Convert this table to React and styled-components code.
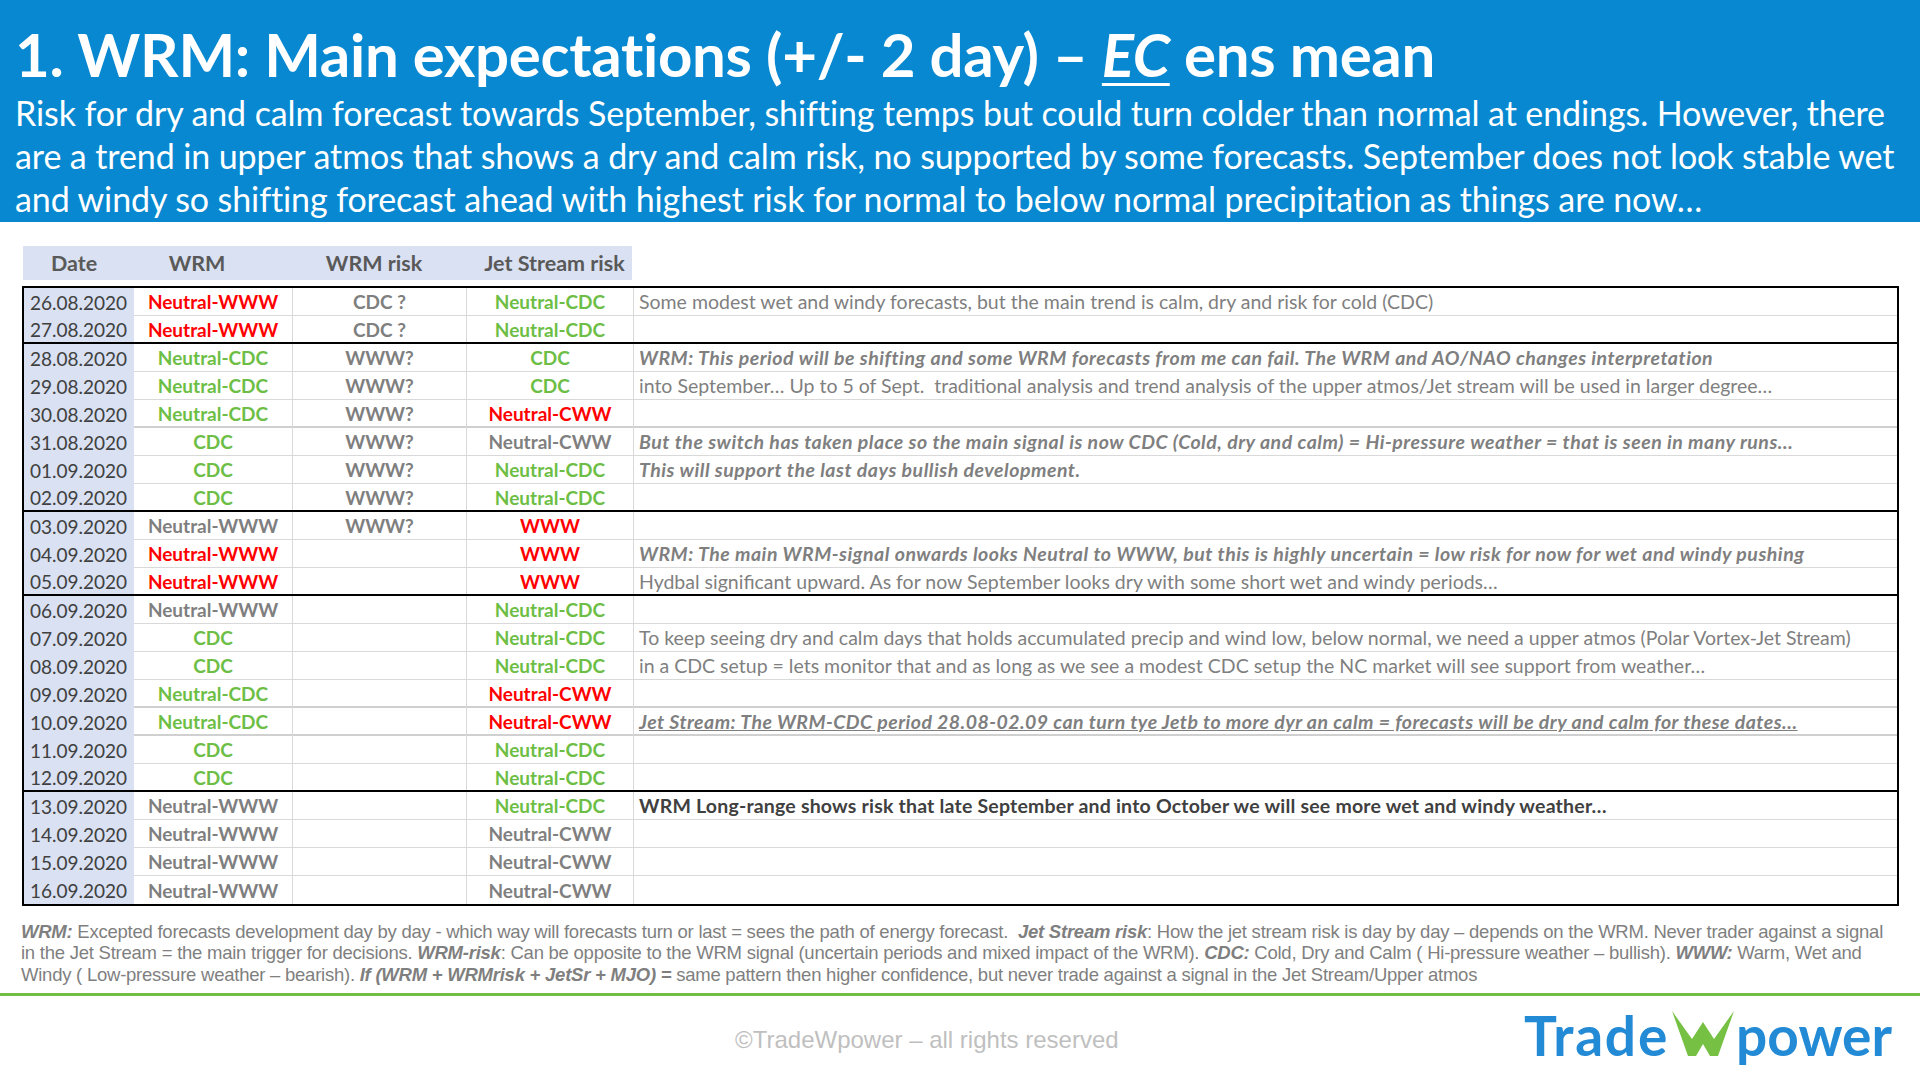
import React from "react";
import styled, { createGlobalStyle } from "styled-components";

const Global = createGlobalStyle`
  html, body { margin: 0; padding: 0; background: #fff; }
  body { width: 1920px; height: 1080px; overflow: hidden; font-family: Lato, "Open Sans", sans-serif; }
  * { box-sizing: border-box; }
`;

const Page = styled.div`
  width: 1920px;
  height: 1080px;
  display: flex;
  flex-direction: column;
  background: #fff;
`;

const Banner = styled.header`
  height: 222px;
  background: #0788d0;
  color: #fff;
  padding: 22px 0 0 15px;
  font-family: Lato, sans-serif;
`;

const Title = styled.h1`
  margin: 0;
  font-size: 60px;
  line-height: 64px;
  font-weight: 700;
  letter-spacing: -0.3px;
  white-space: nowrap;
  em { font-style: italic; text-decoration: underline; text-decoration-thickness: 3px; text-underline-offset: 6px; }
`;

const Lead = styled.div`
  margin-top: 5px;
  font-size: 34px;
  line-height: 43px;
  letter-spacing: -0.1px;
`;

const LeadLine = styled.span`
  display: block;
  white-space: nowrap;
`;

const Main = styled.main`
  padding: 24px 21px 0 22px;
`;

const cols = "110px 158px 174px 167px 1fr";

const HeadRow = styled.div`
  display: grid;
  grid-template-columns: 110px 158px 174px 167px;
  width: 609px;
  margin-left: 1px;
  height: 34px;
  background: #d9e1f2;
`;

const HeadCell = styled.div`
  display: flex;
  align-items: center;
  justify-content: center;
  font-size: 21.5px;
  font-weight: 700;
  color: #595959;
  padding-left: ${(p) => p.$padL || 0}px;
  padding-right: ${(p) => p.$padR || 0}px;
`;

const Body = styled.div`
  margin-top: 6px;
  border: 2px solid #000;
`;

const Row = styled.div`
  display: grid;
  grid-template-columns: ${cols};
  height: 28px;
  border-bottom: ${(p) => (p.$end ? "2px solid #000" : "none")};
  font-size: 19px;
`;

const DateCell = styled.div`
  background: #d9e1f2;
  color: #404040;
  display: flex;
  align-items: center;
  padding-left: 6px;
`;

const Cell = styled.div`
  display: flex;
  align-items: center;
  justify-content: ${(p) => (p.$left ? "flex-start" : "center")};
  padding-left: ${(p) => (p.$left ? "5px" : "0")};
  border-left: ${(p) => (p.$noline ? "none" : "1px solid #d9d9d9")};
  border-bottom: ${(p) => (p.$end ? "none" : p.$heavy ? "2px solid #d0d0d0" : "1px solid #d9d9d9")};
  white-space: nowrap;
  overflow: hidden;
`;

const toneColor = { red: "#ff0000", green: "#6dbe45", gray: "#7f7f7f" };

const Val = styled.span`
  font-weight: 700;
  color: ${(p) => toneColor[p.$tone]};
`;

const noteStyles = {
  plain: "font-weight: 400; letter-spacing: 0;",
  em: "font-weight: 700; font-style: italic; letter-spacing: 0.5px;",
  link: "font-weight: 700; font-style: italic; letter-spacing: 0.45px; text-decoration: underline;",
  strong: "font-weight: 700; letter-spacing: 0.2px; color: #404040;",
};

const Note = styled.span`
  font-size: 19.5px;
  color: #7f7f7f;
  ${(p) => noteStyles[p.$variant]}
`;

const Legend = styled.div`
  margin: 15px 0 0 -1px;
  font-family: "Liberation Sans", Arial, sans-serif;
  font-size: 18.5px;
  letter-spacing: -0.24px;
  line-height: 21.4px;
  color: #7f7f7f;
  b { font-style: italic; }
`;

const LegendLine = styled.span`
  display: block;
  white-space: nowrap;
`;

const Rule = styled.div`
  margin-top: 8px;
  height: 3px;
  background: #70bf44;
`;

const Footer = styled.footer`
  flex: 1;
  display: flex;
  align-items: center;
  padding: 4px 28px 0 735px;
`;

const Copy = styled.span`
  font-family: "Liberation Sans", Arial, sans-serif;
  font-size: 24px;
  color: #bfbfbf;
`;

const Logo = styled.div`
  margin-left: auto;
  margin-top: -9px;
  display: flex;
  align-items: baseline;
  font-family: Lato, sans-serif;
  font-weight: 700;
  font-size: 55px;
  line-height: 1;
  color: #238ad5;
  svg { margin: 0 2px 0 3px; }
`;

const LogoWord = styled.span`
  letter-spacing: ${(p) => p.$spacing || 0}px;
`;

const rows = [
  ["26.08.2020", ["Neutral-WWW", "red"], ["CDC ?", "gray"], ["Neutral-CDC", "green"], ["Some modest wet and windy forecasts, but the main trend is calm, dry and risk for cold (CDC)", "plain"]],
  ["27.08.2020", ["Neutral-WWW", "red"], ["CDC ?", "gray"], ["Neutral-CDC", "green"], null, true],
  ["28.08.2020", ["Neutral-CDC", "green"], ["WWW?", "gray"], ["CDC", "green"], ["WRM: This period will be shifting and some WRM forecasts from me can fail. The WRM and AO/NAO changes interpretation", "em"]],
  ["29.08.2020", ["Neutral-CDC", "green"], ["WWW?", "gray"], ["CDC", "green"], ["into September\u2026 Up to 5 of Sept.\u00a0 traditional analysis and trend analysis of the upper atmos/Jet stream will be used in larger degree\u2026", "plain"]],
  ["30.08.2020", ["Neutral-CDC", "green"], ["WWW?", "gray"], ["Neutral-CWW", "red"], null, false, true],
  ["31.08.2020", ["CDC", "green"], ["WWW?", "gray"], ["Neutral-CWW", "gray"], ["But the switch has taken place so the main signal is now CDC (Cold, dry and calm) = Hi-pressure weather = that is seen in many runs\u2026", "em"]],
  ["01.09.2020", ["CDC", "green"], ["WWW?", "gray"], ["Neutral-CDC", "green"], ["This will support the last days bullish development.", "em"]],
  ["02.09.2020", ["CDC", "green"], ["WWW?", "gray"], ["Neutral-CDC", "green"], null, true],
  ["03.09.2020", ["Neutral-WWW", "gray"], ["WWW?", "gray"], ["WWW", "red"], null],
  ["04.09.2020", ["Neutral-WWW", "red"], null, ["WWW", "red"], ["WRM: The main WRM-signal onwards looks Neutral to WWW, but this is highly uncertain = low risk for now for wet and windy pushing", "em"]],
  ["05.09.2020", ["Neutral-WWW", "red"], null, ["WWW", "red"], ["Hydbal significant upward. As for now September looks dry with some short wet and windy periods\u2026", "plain"], true],
  ["06.09.2020", ["Neutral-WWW", "gray"], null, ["Neutral-CDC", "green"], null],
  ["07.09.2020", ["CDC", "green"], null, ["Neutral-CDC", "green"], ["To keep seeing dry and calm days that holds accumulated precip and wind low, below normal, we need a upper atmos (Polar Vortex-Jet Stream)", "plain"]],
  ["08.09.2020", ["CDC", "green"], null, ["Neutral-CDC", "green"], ["in a CDC setup = lets monitor that and as long as we see a modest CDC setup the NC market will see support from weather\u2026", "plain"]],
  ["09.09.2020", ["Neutral-CDC", "green"], null, ["Neutral-CWW", "red"], null, false, true],
  ["10.09.2020", ["Neutral-CDC", "green"], null, ["Neutral-CWW", "red"], ["Jet Stream: The WRM-CDC period 28.08-02.09 can turn tye Jetb to more dyr an calm = forecasts will be dry and calm for these dates\u2026", "link"], false, true],
  ["11.09.2020", ["CDC", "green"], null, ["Neutral-CDC", "green"], null],
  ["12.09.2020", ["CDC", "green"], null, ["Neutral-CDC", "green"], null, true],
  ["13.09.2020", ["Neutral-WWW", "gray"], null, ["Neutral-CDC", "green"], ["WRM Long-range shows risk that late September and into October we will see more wet and windy weather\u2026", "strong"]],
  ["14.09.2020", ["Neutral-WWW", "gray"], null, ["Neutral-CWW", "gray"], null],
  ["15.09.2020", ["Neutral-WWW", "gray"], null, ["Neutral-CWW", "gray"], null],
  ["16.09.2020", ["Neutral-WWW", "gray"], null, ["Neutral-CWW", "gray"], null, true],
];

const WMark = () => (
  <svg width="62" height="45" viewBox="0 0 62 45" aria-hidden="true">
    <polygon
      fill="#76c143"
      points="0,0 20,28 31,11 42,28 62,0 46,45 38,45 31,33 24,45 16,45"
    />
  </svg>
);

export default function App() {
  return (
    <Page>
      <Global />
      <Banner>
        <Title>
          1. WRM: Main expectations (+/- 2 day) – <em>EC</em> ens mean
        </Title>
        <Lead>
          <LeadLine>Risk for dry and calm forecast towards September, shifting temps but could turn colder than normal at endings. However, there</LeadLine>
          <LeadLine>are a trend in upper atmos that shows a dry and calm risk, no supported by some forecasts. September does not look stable wet</LeadLine>
          <LeadLine>and windy so shifting forecast ahead with highest risk for normal to below normal precipitation as things are now…</LeadLine>
        </Lead>
      </Banner>
      <Main>
        <HeadRow>
          <HeadCell $padR={8}>Date</HeadCell>
          <HeadCell $padR={30}>WRM</HeadCell>
          <HeadCell $padR={8}>WRM risk</HeadCell>
          <HeadCell $padL={12}>Jet Stream risk</HeadCell>
        </HeadRow>
        <Body>
          {rows.map(([date, wrm, risk, jet, note, end, heavy], i) => {
            const isEnd = end || i === rows.length - 1;
            return (
              <Row key={date} $end={end && i !== rows.length - 1}>
                <DateCell>{date}</DateCell>
                <Cell $noline $end={isEnd} $heavy={heavy}>
                  {wrm && <Val $tone={wrm[1]}>{wrm[0]}</Val>}
                </Cell>
                <Cell $end={isEnd} $heavy={heavy}>
                  {risk && <Val $tone={risk[1]}>{risk[0]}</Val>}
                </Cell>
                <Cell $end={isEnd} $heavy={heavy}>
                  {jet && <Val $tone={jet[1]}>{jet[0]}</Val>}
                </Cell>
                <Cell $left $end={isEnd} $heavy={heavy}>
                  {note && <Note $variant={note[1]}>{note[0]}</Note>}
                </Cell>
              </Row>
            );
          })}
        </Body>
        <Legend>
          <LegendLine>
            <b>WRM:</b> Excepted forecasts development day by day - which way will forecasts turn or last = sees the path of energy forecast.&nbsp; <b>Jet Stream risk</b>: How the jet stream risk is day by day – depends on the WRM. Never trader against a signal
          </LegendLine>
          <LegendLine>
            in the Jet Stream = the main trigger for decisions. <b>WRM-risk</b>: Can be opposite to the WRM signal (uncertain periods and mixed impact of the WRM). <b>CDC:</b> Cold, Dry and Calm ( Hi-pressure weather – bullish). <b>WWW:</b> Warm, Wet and
          </LegendLine>
          <LegendLine>
            Windy ( Low-pressure weather – bearish). <b>If (WRM + WRMrisk + JetSr + MJO) =</b> same pattern then higher confidence, but never trade against a signal in the Jet Stream/Upper atmos
          </LegendLine>
        </Legend>
      </Main>
      <Rule />
      <Footer>
        <Copy>©TradeWpower – all rights reserved</Copy>
        <Logo>
          <LogoWord $spacing={1.8}>Trade</LogoWord>
          <WMark />
          <LogoWord>power</LogoWord>
        </Logo>
      </Footer>
    </Page>
  );
}
